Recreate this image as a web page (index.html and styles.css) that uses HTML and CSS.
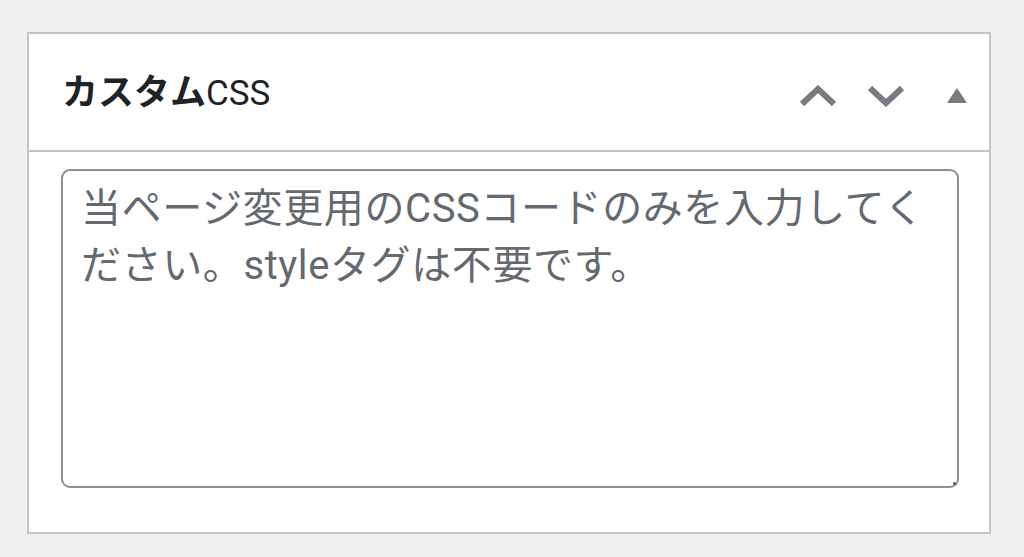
FILE: index.html
```html
<!DOCTYPE html>
<html lang="ja">
<head>
<meta charset="utf-8">
<link rel="stylesheet" href="styles.css">
</head>
<body>
<div class="postbox">
  <div class="postbox-header">
    <h2 class="hndle"><span class="jp">カスタム</span><span class="en">CSS</span></h2>
    <div class="handle-actions">
      <button class="handle-btn" aria-label="上へ移動">
        <svg width="38" height="22" viewBox="0 0 38 22"><path d="M3 19 L19 4 L35 19" fill="none" stroke="#787c82" stroke-width="6" stroke-linejoin="miter"/></svg>
      </button>
      <button class="handle-btn" aria-label="下へ移動">
        <svg width="38" height="22" viewBox="0 0 38 22"><path d="M3 3 L19 18 L35 3" fill="none" stroke="#787c82" stroke-width="6" stroke-linejoin="miter"/></svg>
      </button>
      <button class="handle-btn toggle" aria-label="パネルを切り替え">
        <svg width="20" height="16" viewBox="0 0 20 16"><path d="M10 0 L20 15 L0 15 Z" fill="#787c82"/></svg>
      </button>
    </div>
  </div>
  <div class="inside">
    <div class="field">
      <textarea class="css-input" placeholder="当ページ変更用のCSSコードのみを入力してください。styleタグは不要です。"></textarea>
      <span class="grip"></span>
    </div>
  </div>
</div>
</body>
</html>
```
FILE: styles.css
```css
html, body {
  margin: 0;
  padding: 0;
}
body {
  background: #f0f0f1;
  padding: 32px 33px 0 27px;
  height: 557px;
  box-sizing: border-box;
  font-family: Roboto, "Noto Sans CJK JP", sans-serif;
}
.postbox {
  background: #fff;
  border: 2px solid #c3c4c7;
  height: 502px;
  box-sizing: border-box;
}
.postbox-header {
  display: flex;
  align-items: center;
  justify-content: space-between;
  height: 118px;
  border-bottom: 2px solid #c3c4c7;
  box-sizing: border-box;
  padding: 0 22px 0 33px;
}
.hndle {
  margin: 0;
  font-size: 36px;
  line-height: 1;
  color: #1d2327;
  font-weight: normal;
  display: flex;
  align-items: baseline;
  position: relative;
  top: -1px;
}
.hndle .jp {
  font-family: "Noto Sans CJK JP", sans-serif;
  font-weight: 700;
}
.hndle .en {
  font-family: Roboto, sans-serif;
  font-weight: 400;
  font-size: 35px;
}
.handle-actions {
  display: flex;
  align-items: center;
  gap: 30px;
  padding-top: 8px;
}
.handle-btn {
  border: 0;
  background: none;
  padding: 0;
  margin: 0;
  display: flex;
  align-items: center;
}
.handle-btn.toggle {
  padding-left: 12px;
}
.inside {
  padding: 17px 30px 0 32px;
}
.field {
  position: relative;
}
.css-input {
  display: block;
  width: 100%;
  height: 319px;
  box-sizing: border-box;
  border: 2px solid #8c8f94;
  border-radius: 9px;
  padding: 9px 16px 9px 18px;
  font-family: Roboto, "Noto Sans CJK JP", sans-serif;
  font-size: 40px;
  letter-spacing: 0.6px;
  line-height: 57px;
  color: #2c3338;
  resize: none;
  background: #fff;
}
.css-input::placeholder {
  color: #646970;
  opacity: 1;
}
.grip {
  position: absolute;
  right: 3px;
  bottom: 3px;
  width: 3px;
  height: 3px;
  border-radius: 50%;
  background: #50575e;
}
```
